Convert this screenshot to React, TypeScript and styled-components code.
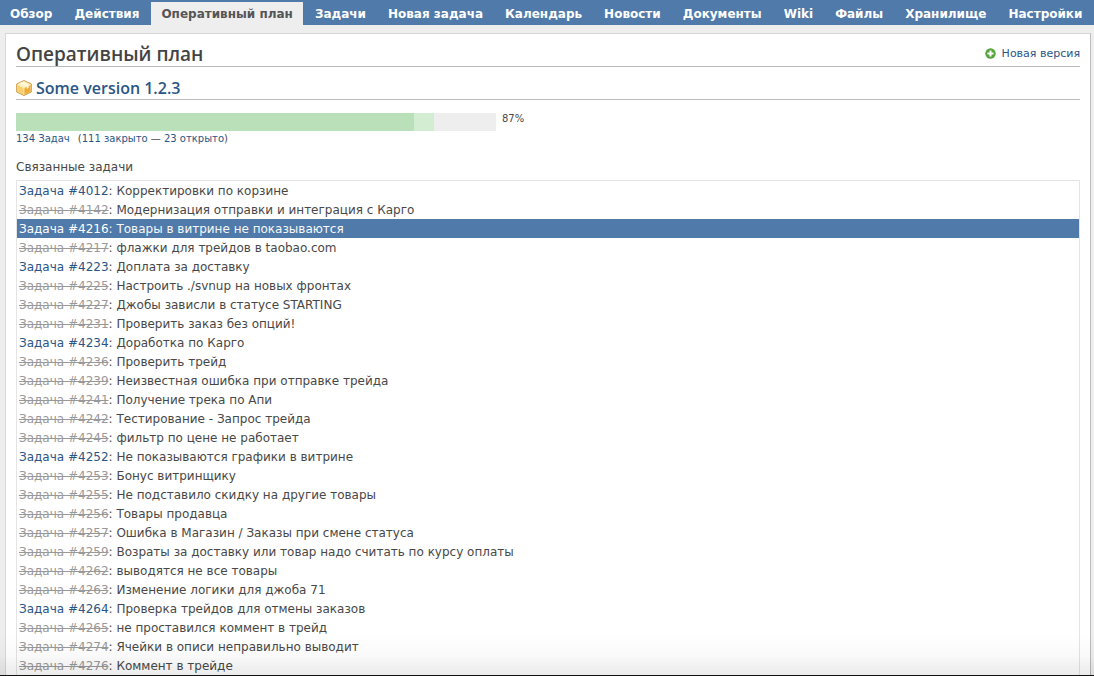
import React from 'react';
import styled, { createGlobalStyle } from 'styled-components';

const GlobalStyle = createGlobalStyle`
  * { box-sizing: border-box; }
  body {
    margin: 0;
    background: #eee;
    color: #484848;
    font-family: "DejaVu Sans", Verdana, sans-serif;
    font-size: 12px;
  }
`;

const Page = styled.div`
  min-height: 100vh;
  display: flex;
  flex-direction: column;
`;

const Nav = styled.nav`
  display: flex;
  align-items: flex-end;
  gap: 2px;
  height: 25px;
  background: #507aaa;
  overflow: hidden;
`;

const NavLink = styled.a<{ $active?: boolean }>`
  padding: 2px 10px 0;
  height: 23px;
  line-height: 21px;
  font-weight: bold;
  white-space: nowrap;
  text-decoration: none;
  color: ${p => (p.$active ? '#555' : '#fff')};
  background: ${p => (p.$active ? '#eee' : 'transparent')};
`;

const Panel = styled.main`
  flex: 1;
  margin: 8px 3px 0 5px;
  padding: 0 10px;
  background: #fff;
  border: 1px solid #d7d7d7;
  border-right-color: #bbb;
  border-bottom: 0;
`;

const TitleRow = styled.header`
  display: flex;
  justify-content: space-between;
  align-items: center;
  height: 33px;
  padding-top: 8px;
  border-bottom: 1px solid #bbb;
`;

const headingFont = '"Trebuchet MS", "Open Sans", "Noto Sans", sans-serif';

const Title = styled.h2`
  margin: 0;
  font: 600 19px/24px ${headingFont};
  color: #444;
`;

const Link = styled.a`
  color: #2a5685;
  text-decoration: none;
`;

const AddLink = styled(Link)`
  display: flex;
  align-items: center;
  gap: 6px;
  font-size: 11px;
  padding-bottom: 1px;
`;

const VersionTitle = styled.h3`
  display: flex;
  align-items: center;
  gap: 4px;
  height: 33px;
  margin: 0 0 13px;
  padding-top: 10px;
  border-bottom: 1px solid #bbb;
  font: 600 16px/22px ${headingFont};
`;

const ProgressRow = styled.div`
  display: flex;
  gap: 6px;
  font-size: 10px;
  line-height: 12px;
`;

const Bar = styled.div`
  display: flex;
  width: 480px;
  height: 18px;
  background: #eee;
`;

const Segment = styled.div<{ $color: string }>`
  background: ${p => p.$color};
`;

const Counts = styled.p`
  display: flex;
  gap: 8px;
  margin: 0 0 12px;
  font-size: 10px;
  line-height: 16px;
`;

const Issues = styled.section`
  h4 {
    margin: 0;
    font-weight: normal;
    font-size: 12px;
    line-height: 16px;
    padding-bottom: 5px;
  }
  ul {
    margin: 0;
    padding: 0;
    list-style: none;
    border: 1px solid #e4e4e4;
    border-bottom: 0;
  }
`;

const IssueLink = styled(Link)<{ $state: State }>`
  color: ${p => ({ open: '#2a5685', closed: '#999', selected: '#fff' })[p.$state]};
  text-decoration: ${p => (p.$state === 'closed' ? 'line-through' : 'none')};
`;

const IssueRow = styled.li<{ $selected: boolean }>`
  padding: 2px 2px 0;
  line-height: 17px;
  color: ${p => (p.$selected ? '#f8f8f8' : 'inherit')};
  background: ${p => (p.$selected ? '#507aaa' : 'transparent')};
`;

const BottomShade = styled.div`
  position: fixed;
  left: 0;
  right: 0;
  bottom: 0;
  height: 42px;
  pointer-events: none;
  border-bottom: 1px solid #111;
  background: linear-gradient(rgba(0, 0, 0, 0), rgba(0, 0, 0, 0.02) 50%, rgba(0, 0, 0, 0.08));
`;

type State = 'open' | 'closed' | 'selected';

const tabs = ['Обзор', 'Действия', 'Оперативный план', 'Задачи', 'Новая задача', 'Календарь',
  'Новости', 'Документы', 'Wiki', 'Файлы', 'Хранилище', 'Настройки'];

const issues: [number, string, State][] = [
  [4012, 'Корректировки по корзине', 'open'],
  [4142, 'Модернизация отправки и интеграция с Карго', 'closed'],
  [4216, 'Товары в витрине не показываются', 'selected'],
  [4217, 'флажки для трейдов в taobao.com', 'closed'],
  [4223, 'Доплата за доставку', 'open'],
  [4225, 'Настроить ./svnup на новых фронтах', 'closed'],
  [4227, 'Джобы зависли в статусе STARTING', 'closed'],
  [4231, 'Проверить заказ без опций!', 'closed'],
  [4234, 'Доработка по Карго', 'open'],
  [4236, 'Проверить трейд', 'closed'],
  [4239, 'Неизвестная ошибка при отправке трейда', 'closed'],
  [4241, 'Получение трека по Апи', 'closed'],
  [4242, 'Тестирование - Запрос трейда', 'closed'],
  [4245, 'фильтр по цене не работает', 'closed'],
  [4252, 'Не показываются графики в витрине', 'open'],
  [4253, 'Бонус витринщику', 'closed'],
  [4255, 'Не подставило скидку на другие товары', 'closed'],
  [4256, 'Товары продавца', 'closed'],
  [4257, 'Ошибка в Магазин / Заказы при смене статуса', 'closed'],
  [4259, 'Возраты за доставку или товар надо считать по курсу оплаты', 'closed'],
  [4262, 'выводятся не все товары', 'closed'],
  [4263, 'Изменение логики для джоба 71', 'closed'],
  [4264, 'Проверка трейдов для отмены заказов', 'open'],
  [4265, 'не проставился коммент в трейд', 'closed'],
  [4274, 'Ячейки в описи неправильно выводит', 'closed'],
  [4276, 'Коммент в трейде', 'closed'],
];

const PackageIcon = () => (
  <svg width="16" height="16" viewBox="0 0 16 16" aria-hidden="true">
    <path d="M8 .5 15.300 4v8L8 15.500.7 12V4z" fill="#fbe3a0" stroke="#c99a45" strokeLinejoin="round" />
    <path d="M8 1.200 14.300 4.300 8 7.600 1.700 4.300z" fill="#fdf0c4" />
    <path d="M1.500 4.800 8 8v6.700L1.500 11.600z" fill="#f8cf70" />
    <path d="M14.500 4.800 8 8v6.700l6.500-3.100z" fill="#eda93a" />
    <path d="M4.200 3 10.800 6.300v2.500l1.800-.9V5.200L6 2.100z" fill="#fffbe8" />
    <path d="M2 5 8 8l6-3M8 8v6.500" fill="none" stroke="#fff0b8" strokeWidth=".7" />
  </svg>
);

const AddIcon = () => (
  <svg width="11" height="11" viewBox="0 0 11 11" aria-hidden="true">
    <circle cx="5.500" cy="5.500" r="5.200" fill="#55a53c" />
    <path d="M5.500 2.500v6M2.500 5.500h6" stroke="#fff" strokeWidth="2" />
  </svg>
);

export default function App() {
  return (
    <Page>
      <GlobalStyle />
      <Nav>
        {tabs.map(t => (
          <NavLink key={t} href="#" $active={t === 'Оперативный план'}>{t}</NavLink>
        ))}
      </Nav>
      <Panel>
        <TitleRow>
          <Title>Оперативный план</Title>
          <AddLink href="#"><AddIcon />Новая версия</AddLink>
        </TitleRow>
        <VersionTitle>
          <PackageIcon />
          <Link href="#">Some version 1.2.3</Link>
        </VersionTitle>
        <ProgressRow>
          <Bar role="progressbar" aria-label="Some version 1.2.3" aria-valuenow={87} aria-valuemin={0} aria-valuemax={100}>
            <Segment $color="#bae0ba" style={{ width: '83%' }} />
            <Segment $color="#d3edd3" style={{ width: '4%' }} />
          </Bar>
          <span>87%</span>
        </ProgressRow>
        <Counts>
          <Link href="#">134 Задач</Link>
          <span>(<Link href="#">111 закрыто</Link> — <Link href="#">23 открыто</Link>)</span>
        </Counts>
        <Issues>
          <h4>Связанные задачи</h4>
          <ul>
            {issues.map(([id, subject, state]) => (
              <IssueRow key={id} $selected={state === 'selected'}>
                <IssueLink href="#" $state={state}>Задача #{id}</IssueLink>: {subject}
              </IssueRow>
            ))}
          </ul>
        </Issues>
      </Panel>
      <BottomShade />
    </Page>
  );
}
